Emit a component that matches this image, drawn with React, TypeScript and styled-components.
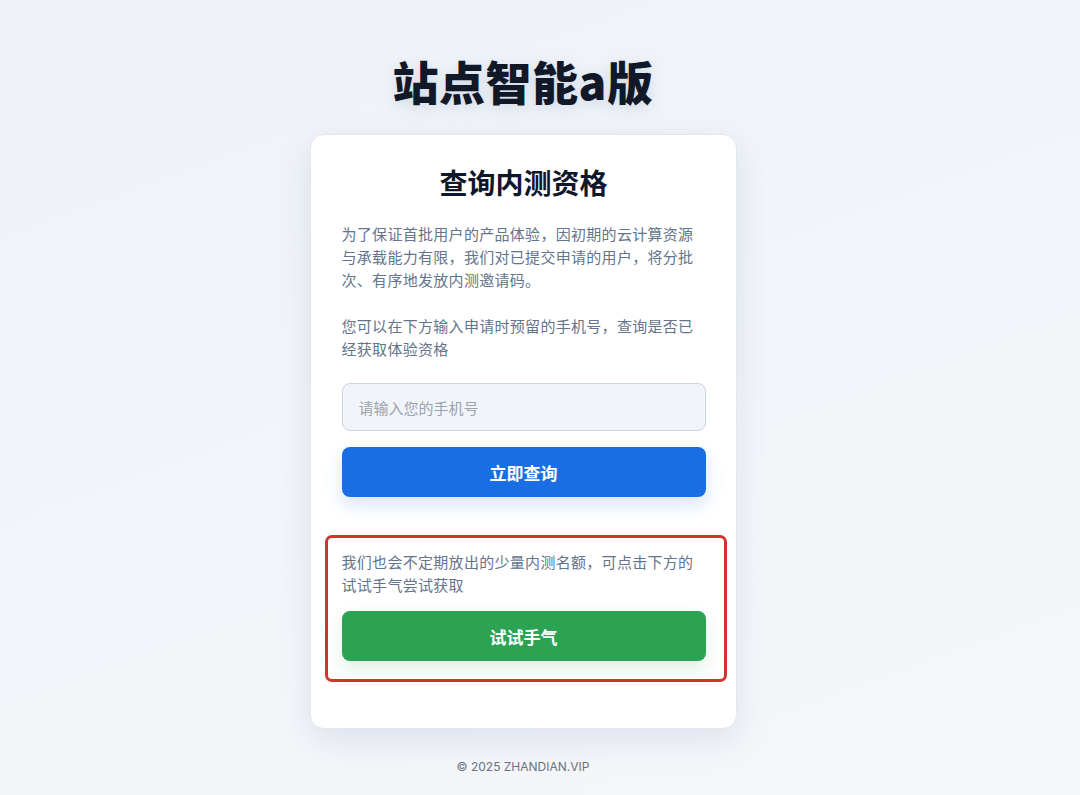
import React from "react";
import styled, { createGlobalStyle } from "styled-components";

const Global = createGlobalStyle`
  html, body { margin: 0; padding: 0; }
  body {
    background: linear-gradient(160deg, #eef2f8 0%, #f2f5f9 55%, #f5f7fa 100%);
    font-family: Inter, "Noto Sans CJK SC", "Noto Sans", sans-serif;
    min-height: 795px;
  }
  * { box-sizing: border-box; }
`;

const Page = styled.main`
  display: flex;
  flex-direction: column;
  align-items: center;
  padding: 51px 34px 0 0;
  min-height: 795px;
`;

const SiteTitle = styled.h1`
  margin: 0 0 25px;
  font-family: "Noto Sans CJK SC", sans-serif;
  font-size: 46px;
  line-height: 58px;
  font-weight: 900;
  color: #111827;
  letter-spacing: 0.5px;
  text-shadow: 0 4px 14px rgba(120, 140, 180, 0.25);
`;

const Card = styled.section`
  width: 427px;
  background: #ffffff;
  border: 1px solid #e3e8ef;
  border-radius: 14px;
  box-shadow: 0 12px 32px rgba(90, 115, 160, 0.14);
  padding: 27px 30px 46px 31px;
  display: flex;
  flex-direction: column;
`;

const CardTitle = styled.h2`
  margin: 0 0 20px;
  text-align: center;
  font-family: "Noto Sans CJK SC", sans-serif;
  font-size: 28px;
  line-height: 40px;
  font-weight: 700;
  color: #0f172a;
`;

const Text = styled.p<{ $gap?: number }>`
  margin: 0 0 ${(p) => p.$gap ?? 0}px;
  font-family: "Noto Sans CJK SC", sans-serif;
  font-size: 15px;
  line-height: 23px;
  letter-spacing: 0.3px;
  color: #64748b;
`;

const Input = styled.input`
  width: 100%;
  height: 48px;
  margin-top: 23px;
  padding: 0 16px;
  border: 1px solid #cbd5e1;
  border-radius: 8px;
  background: #f1f5f9;
  font-family: "Noto Sans CJK SC", sans-serif;
  font-size: 15px;
  color: #334155;
  outline: none;
  &::placeholder { color: #9ca3af; }
`;

const Button = styled.button<{ $color: string; $glow: string }>`
  width: 100%;
  height: 50px;
  border: none;
  border-radius: 8px;
  background: ${(p) => p.$color};
  color: #ffffff;
  font-family: "Noto Sans CJK SC", sans-serif;
  font-size: 17px;
  font-weight: 700;
  cursor: pointer;
  box-shadow: 0 8px 18px ${(p) => p.$glow};
`;

const QueryButton = styled(Button)`
  margin-top: 16px;
`;

const LuckBox = styled.div`
  margin: 38px -21px 0 -17px;
  padding: 12px 18px 18px 14px;
  border: 3px solid #d0342c;
  border-radius: 7px;
  display: flex;
  flex-direction: column;
`;

const Footer = styled.footer`
  margin-top: 30px;
  font-family: Inter, "Noto Sans", sans-serif;
  font-size: 12px;
  color: #6b7280;
`;

export default function App() {
  return (
    <>
      <Global />
      <Page>
        <SiteTitle>站点智能a版</SiteTitle>
        <Card>
          <CardTitle>查询内测资格</CardTitle>
          <Text $gap={23}>
            为了保证首批用户的产品体验，因初期的云计算资源与承载能力有限，我们对已提交申请的用户，将分批次、有序地发放内测邀请码。
          </Text>
          <Text>您可以在下方输入申请时预留的手机号，查询是否已经获取体验资格</Text>
          <Input placeholder="请输入您的手机号" />
          <QueryButton $color="#1a6ee3" $glow="rgba(26, 110, 227, 0.18)">
            立即查询
          </QueryButton>
          <LuckBox>
            <Text $gap={15}>我们也会不定期放出的少量内测名额，可点击下方的试试手气尝试获取</Text>
            <Button $color="#2ba352" $glow="rgba(43, 163, 82, 0.16)">试试手气</Button>
          </LuckBox>
        </Card>
        <Footer>© 2025 ZHANDIAN.VIP</Footer>
      </Page>
    </>
  );
}
